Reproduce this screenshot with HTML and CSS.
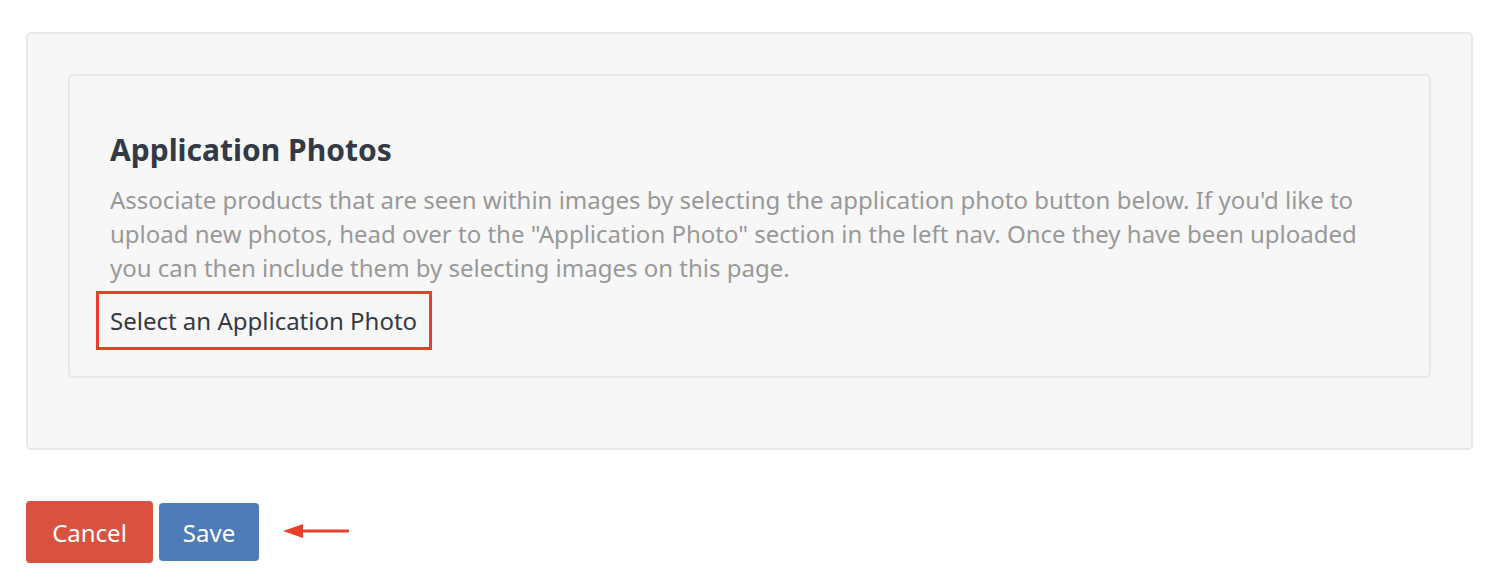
FILE: index.html
```html
<!DOCTYPE html>
<html>
<head>
<meta charset="utf-8">
<link rel="stylesheet" href="styles.css">
</head>
<body>
<div class="page">
  <div class="outer">
    <div class="inner">
      <h2 class="title">Application Photos</h2>
      <p class="desc">Associate products that are seen within images by selecting the application photo button below. If you'd like to upload new photos, head over to the "Application Photo" section in the left nav. Once they have been uploaded you can then include them by selecting images on this page.</p>
      <div class="select-wrap"><span class="select">Select an Application Photo</span></div>
    </div>
  </div>
  <div class="actions">
    <button class="btn btn-cancel">Cancel</button>
    <button class="btn btn-save">Save</button>
    <svg class="arrow" width="66" height="20" viewBox="0 0 66 20"><path d="M0 10 L20 3 L20 17 Z" fill="#e8402a"/><rect x="18" y="8.5" width="48" height="3" fill="#e8402a"/></svg>
  </div>
</div>
</body>
</html>
```

FILE: styles.css
```css
html, body {
  margin: 0;
  padding: 0;
  background: #ffffff;
}
body {
  font-family: "Noto Sans", "Open Sans", sans-serif;
}
.page {
  padding: 32px 31px 0 26px;
}
.outer {
  box-sizing: border-box;
  width: 1447px;
  height: 418px;
  background: #f7f7f7;
  border: 2px solid #e8e8e8;
  border-radius: 5px;
  padding: 40px 40px 0 40px;
}
.inner {
  box-sizing: border-box;
  width: 1363px;
  height: 304px;
  background: #f7f7f7;
  border: 2px solid #e8e8e8;
  border-radius: 5px;
  padding: 56px 40px 0 40px;
}
.title {
  margin: 0;
  font-size: 30px;
  line-height: 36px;
  font-weight: 700;
  color: #333945;
}
.desc {
  margin: 15px 0 0 0;
  font-size: 24px;
  line-height: 34px;
  color: #999999;
}
.select-wrap {
  margin-top: 6px;
}
.select {
  display: inline-block;
  box-sizing: border-box;
  height: 59px;
  margin-left: -14px;
  padding: 0 12px 0 11px;
  border: 3px solid #e8402a;
  font-size: 24px;
  line-height: 53px;
  color: #333945;
}
.actions {
  display: flex;
  align-items: center;
  gap: 6px;
  margin-top: 51px;
}
.btn {
  font-family: "Noto Sans", "Open Sans", sans-serif;
  font-size: 24px;
  color: #ffffff;
  border: none;
  border-radius: 4px;
  padding: 0;
}
.btn-cancel {
  width: 127px;
  height: 62px;
  background: #d95240;
}
.btn-save {
  width: 100px;
  height: 58px;
  background: #4f7cb8;
}
.arrow {
  margin-left: 18px;
  margin-top: -2px;
}
```
